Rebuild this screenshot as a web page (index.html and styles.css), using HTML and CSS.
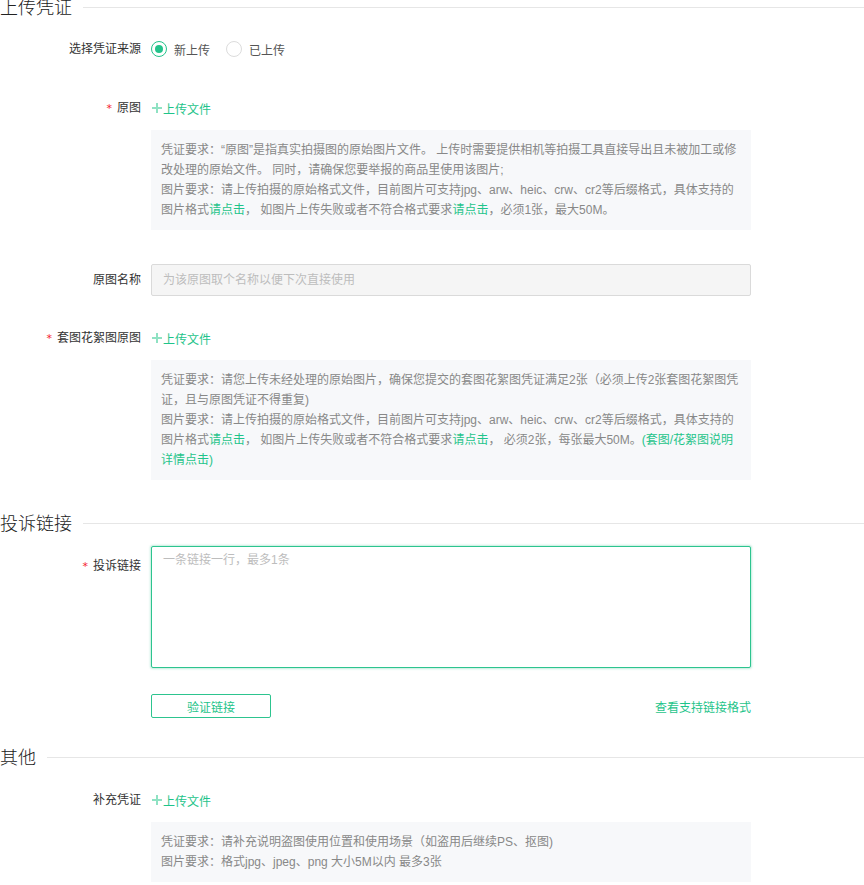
FILE: index.html
```html
<!DOCTYPE html>
<html lang="zh-CN">
<head>
<meta charset="utf-8">
<title>上传凭证</title>
<link rel="stylesheet" href="styles.css">
</head>
<body>
<div class="page">
  <div class="section-title first"><span>上传凭证</span><i class="rule"></i></div>

  <div class="form-item item-source">
    <div class="label">选择凭证来源</div>
    <div class="control radios">
      <label class="radio checked"><span class="dot"></span><span class="radio-text">新上传</span></label>
      <label class="radio"><span class="dot"></span><span class="radio-text">已上传</span></label>
    </div>
  </div>

  <div class="form-item item-orig">
    <div class="label"><span class="req">*</span>原图</div>
    <div class="control">
      <div class="upload"><svg class="plus" width="10" height="10" viewBox="0 0 10 10"><path d="M5 0V10M0 5H10" stroke="#8fe2c3" stroke-width="2"/></svg><span>上传文件</span></div>
      <div class="tip">
        <p>凭证要求：<span class="q">“</span>原图<span class="q">”</span>是指真实拍摄图的原始图片文件。 上传时需要提供相机等拍摄工具直接导出且未被加工或修改处理的原始文件。 同时，请确保您要举报的商品里使用该图片;</p>
        <p>图片要求：请上传拍摄的原始格式文件，目前图片可支持jpg、arw、heic、crw、cr2等后缀格式，具体支持的图片格式<a>请点击</a>， 如图片上传失败或者不符合格式要求<a>请点击</a>，必须1张，最大50M。</p>
      </div>
    </div>
  </div>

  <div class="form-item item-name">
    <div class="label">原图名称</div>
    <div class="control">
      <input class="input" type="text" placeholder="为该原图取个名称以便下次直接使用">
    </div>
  </div>

  <div class="form-item item-set">
    <div class="label"><span class="req">*</span>套图花絮图原图</div>
    <div class="control">
      <div class="upload"><svg class="plus" width="10" height="10" viewBox="0 0 10 10"><path d="M5 0V10M0 5H10" stroke="#8fe2c3" stroke-width="2"/></svg><span>上传文件</span></div>
      <div class="tip">
        <p>凭证要求：请您上传未经处理的原始图片，确保您提交的套图花絮图凭证满足2张（必须上传2张套图花絮图凭证，且与原图凭证不得重复)</p>
        <p>图片要求：请上传拍摄的原始格式文件，目前图片可支持jpg、arw、heic、crw、cr2等后缀格式，具体支持的图片格式<a>请点击</a>， 如图片上传失败或者不符合格式要求<a>请点击</a>， 必须2张，每张最大50M。<a>(套图/花絮图说明详情点击)</a></p>
      </div>
    </div>
  </div>

  <div class="section-title second"><span>投诉链接</span><i class="rule"></i></div>

  <div class="form-item item-link">
    <div class="label tall"><span class="req">*</span>投诉链接</div>
    <div class="control">
      <textarea class="textarea" placeholder="一条链接一行，最多1条"></textarea>
    </div>
  </div>

  <div class="form-item item-actions">
    <div class="label"></div>
    <div class="control actions">
      <button class="btn" type="button">验证链接</button>
      <a class="link-right">查看支持链接格式</a>
    </div>
  </div>

  <div class="section-title third"><span>其他</span><i class="rule"></i></div>

  <div class="form-item item-extra">
    <div class="label">补充凭证</div>
    <div class="control">
      <div class="upload"><svg class="plus" width="10" height="10" viewBox="0 0 10 10"><path d="M5 0V10M0 5H10" stroke="#8fe2c3" stroke-width="2"/></svg><span>上传文件</span></div>
      <div class="tip">
        <p>凭证要求：请补充说明盗图使用位置和使用场景（如盗用后继续PS、抠图)</p>
        <p>图片要求：格式jpg、jpeg、png 大小5M以内 最多3张</p>
      </div>
    </div>
  </div>
</div>
</body>
</html>
```

FILE: styles.css
```css
* { box-sizing: border-box; }

body {
  margin: 0;
  background: #fff;
  font-family: "Liberation Sans", "Noto Sans CJK SC", sans-serif;
  font-size: 12px;
  color: #333;
}

.page {
  width: 864px;
  overflow: hidden;
}

.section-title {
  display: flex;
  align-items: center;
  height: 18px;
  font-size: 18px;
  line-height: 18px;
  font-weight: 300;
  color: #222;
}
.section-title .rule {
  flex: 1;
  height: 1px;
  background: #e6e6e6;
  margin-left: 11px;
  margin-top: -2px;
}
.section-title.first { margin-top: -1px; }
.section-title.second { margin-top: 35px; }
.section-title.third { margin-top: 31px; }

.form-item {
  display: flex;
  align-items: flex-start;
}
.label {
  width: 151px;
  flex-shrink: 0;
  padding-right: 10px;
  text-align: right;
  line-height: 32px;
  color: #333;
}
.label.tall { line-height: 40px; }
.req {
  color: #f5222d;
  margin-right: 5px;
  font-family: "DejaVu Sans", sans-serif;
  font-size: 11px;
}
.control {
  width: 600px;
}

.item-source { margin-top: 16px; }
.item-orig { margin-top: 27px; }
.item-name { margin-top: 34px; }
.item-set { margin-top: 26px; }
.item-link { margin-top: 13px; }
.item-actions { margin-top: 26px; }
.item-extra { margin-top: 17px; }

.radios {
  display: flex;
  align-items: center;
  height: 32px;
}
.radio {
  display: flex;
  align-items: center;
  margin-right: 16px;
  color: #555;
}
.radio .dot {
  width: 16px;
  height: 16px;
  border-radius: 50%;
  border: 1px solid #dcdcdc;
  margin-right: 7px;
  position: relative;
}
.radio.checked .dot {
  border-color: #23c38b;
}
.radio.checked .dot::after {
  content: "";
  position: absolute;
  left: 3px;
  top: 3px;
  width: 8px;
  height: 8px;
  border-radius: 50%;
  background: #23c38b;
}

.upload {
  display: flex;
  align-items: center;
  height: 32px;
  color: #1fc48a;
  padding-left: 1px;
}
.upload .plus {
  margin-right: 1px;
}

.tip {
  margin-top: 6px;
  background: #f7f8fa;
  padding: 10px 10px;
  color: #888;
  line-height: 20px;
}
.tip p { margin: 0; }
.tip a { color: #1fc48a; }
.tip .q { font-family: "Liberation Sans", sans-serif; }

.input {
  display: block;
  width: 600px;
  height: 32px;
  border: 1px solid #dadada;
  border-radius: 2px;
  background: #f5f5f5;
  padding: 0 11px;
  font-family: inherit;
  font-size: 12px;
  outline: none;
}
.input::placeholder { color: #bdbdbd; }

.textarea {
  display: block;
  width: 600px;
  height: 122px;
  border: 1px solid #2dc48f;
  border-radius: 2px;
  box-shadow: 0 0 2px 1px rgba(45, 196, 143, 0.3);
  padding: 4px 11px;
  line-height: 18px;
  font-family: inherit;
  font-size: 12px;
  resize: none;
  outline: none;
}
.textarea::placeholder { color: #bdbdbd; }

.actions {
  display: flex;
  justify-content: space-between;
  align-items: center;
  height: 24px;
}
.btn {
  width: 120px;
  height: 24px;
  border: 1px solid #2dc48f;
  border-radius: 2px;
  background: #fff;
  color: #1fc48a;
  font-family: inherit;
  font-size: 12px;
  padding: 0;
}
.link-right {
  color: #1fc48a;
}
```
